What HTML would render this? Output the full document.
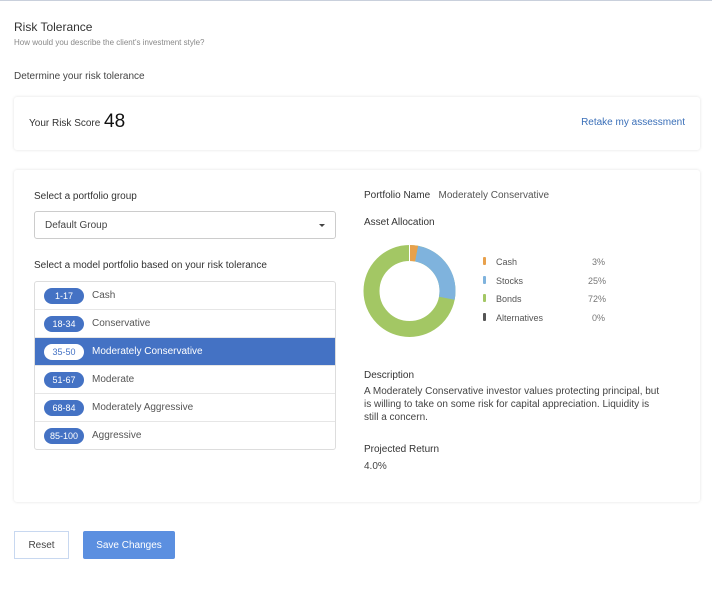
<!DOCTYPE html>
<html><head><style>
*{box-sizing:border-box;margin:0;padding:0}
body{width:712px;height:616px;background:#fff;font-family:"Liberation Sans",sans-serif;color:#333;position:relative;overflow:hidden}
.abs{position:absolute}
.card{position:absolute;background:#fff;border-radius:3px;box-shadow:0 0 3px rgba(0,0,0,.12)}
.row{position:absolute;left:0;width:301px;height:28px;border-bottom:1px solid #e6e6e6;font-size:10px;color:#555}
.row .pill{position:absolute;left:9px;top:6px;width:40px;height:16px;border-radius:8px;background:#4472c4;color:#fff;font-size:9px;text-align:center;line-height:16px}
.row .t{position:absolute;left:57px;top:0;line-height:28px}
.sel{background:#4472c4;color:#fff}
.sel .pill{background:#fff;color:#4472c4}
.btn{display:flex;align-items:center;justify-content:center}
</style></head><body>
<div class="abs" style="left:0;top:0;width:712px;height:1px;background:#c9d0dc"></div>
<div class="abs" style="left:14px;top:20px;font-size:12px;color:#333">Risk Tolerance</div>
<div class="abs" style="left:14px;top:38px;font-size:8px;color:#888">How would you describe the client's investment style?</div>
<div class="abs" style="left:14px;top:71px;font-size:10px;color:#444">Determine your risk tolerance</div>
<div class="card" style="left:14px;top:97px;width:686px;height:53px">
 <div class="abs" style="left:15px;top:21px;font-size:10px;color:#333">Your Risk Score</div>
 <div class="abs" style="left:90px;top:14px;font-size:19px;color:#111">48</div>
 <div class="abs" style="right:15px;top:20px;font-size:10px;color:#3a6fb8">Retake my assessment</div>
</div>
<div class="card" style="left:14px;top:170px;width:686px;height:332px">
 <div class="abs" style="left:20px;top:21px;font-size:10px;color:#333">Select a portfolio group</div>
 <div class="abs" style="left:20px;top:41px;width:302px;height:28px;border:1px solid #ccc;border-radius:3px;font-size:10px;color:#444;padding:0 10px;line-height:27px">Default Group
  <div class="abs" style="right:10px;top:12px;width:0;height:0;border-left:3px solid transparent;border-right:3px solid transparent;border-top:3px solid #444"></div></div>
 <div class="abs" style="left:20px;top:90px;font-size:10px;color:#333">Select a model portfolio based on your risk tolerance</div>
 <div class="abs" style="left:20px;top:111px;width:302px;height:169px;border:1px solid #ddd;border-radius:3px;overflow:hidden">
  <div class="row" style="top:0"><div class="pill">1-17</div><div class="t">Cash</div></div>
  <div class="row" style="top:28px"><div class="pill">18-34</div><div class="t">Conservative</div></div>
  <div class="row sel" style="top:56px"><div class="pill">35-50</div><div class="t">Moderately Conservative</div></div>
  <div class="row" style="top:84px"><div class="pill">51-67</div><div class="t">Moderate</div></div>
  <div class="row" style="top:112px"><div class="pill">68-84</div><div class="t">Moderately Aggressive</div></div>
  <div class="row" style="top:140px;border:none"><div class="pill">85-100</div><div class="t">Aggressive</div></div>
 </div>
 <div class="abs" style="left:350px;top:20px;font-size:10px;color:#333">Portfolio Name &nbsp; <span style="color:#555">Moderately Conservative</span></div>
 <div class="abs" style="left:350px;top:47px;font-size:10px;color:#333">Asset Allocation</div>
 <svg class="abs" style="left:340px;top:70px" width="110" height="110" viewBox="0 0 110 110">
  <g transform="rotate(-90 55.5 51)" fill="none" stroke-width="16">
   <circle cx="55.5" cy="51" r="38" stroke="#a3c764" stroke-dasharray="238.76 238.76"/>
   <circle cx="55.5" cy="51" r="38" stroke="#e8a14c" stroke-dasharray="7.16 238.76"/>
   <circle cx="55.5" cy="51" r="38" stroke="#7fb3dd" stroke-dasharray="59.69 238.76" stroke-dashoffset="-7.16"/>
  </g>
  <line x1="55.5" y1="5" x2="55.5" y2="21" stroke="#fff" stroke-width="1"/>
 </svg>
 <div class="abs" style="left:469px;top:87px;width:3px;height:8px;background:#e8a14c;border-radius:1px"></div>
 <div class="abs" style="left:482px;top:87px;font-size:9px;color:#555">Cash</div><div class="abs" style="left:578px;top:87px;font-size:9px;color:#777">3%</div>
 <div class="abs" style="left:469px;top:106px;width:3px;height:8px;background:#7fb3dd;border-radius:1px"></div>
 <div class="abs" style="left:482px;top:106px;font-size:9px;color:#555">Stocks</div><div class="abs" style="left:574px;top:106px;font-size:9px;color:#777">25%</div>
 <div class="abs" style="left:469px;top:124px;width:3px;height:8px;background:#a3c764;border-radius:1px"></div>
 <div class="abs" style="left:482px;top:124px;font-size:9px;color:#555">Bonds</div><div class="abs" style="left:574px;top:124px;font-size:9px;color:#777">72%</div>
 <div class="abs" style="left:469px;top:143px;width:3px;height:8px;background:#555;border-radius:1px"></div>
 <div class="abs" style="left:482px;top:143px;font-size:9px;color:#555">Alternatives</div><div class="abs" style="left:578px;top:143px;font-size:9px;color:#777">0%</div>
 <div class="abs" style="left:350px;top:200px;font-size:10px;color:#333">Description</div>
 <div class="abs" style="left:350px;top:215px;width:300px;font-size:10px;line-height:13px;color:#444">A Moderately Conservative investor values protecting principal, but is willing to take on some risk for capital appreciation. Liquidity is still a concern.</div>
 <div class="abs" style="left:350px;top:274px;font-size:10px;color:#333">Projected Return</div>
 <div class="abs" style="left:350px;top:291px;font-size:10px;color:#444">4.0%</div>
</div>
<div class="abs btn" style="left:14px;top:531px;width:55px;height:28px;border:1px solid #c8d8f0;font-size:10px;color:#444">Reset</div>
<div class="abs btn" style="left:83px;top:531px;width:92px;height:28px;background:#5b8fe0;border-radius:2px;font-size:10px;color:#fff">Save Changes</div>
</body></html>
